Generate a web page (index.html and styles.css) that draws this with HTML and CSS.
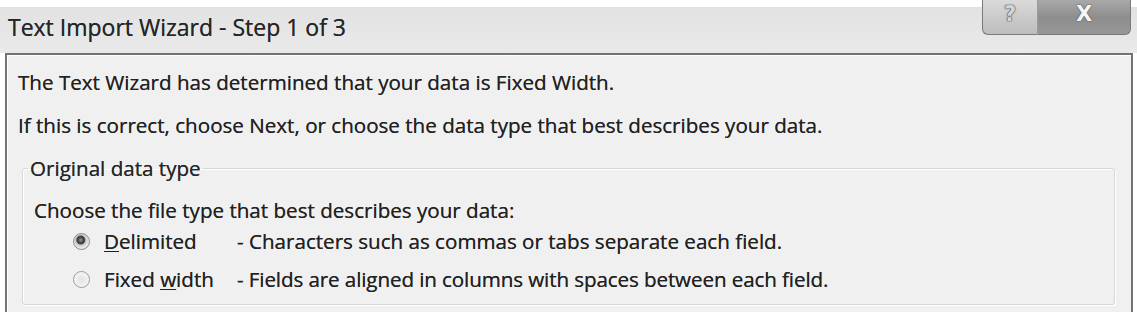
FILE: index.html
```html
<!DOCTYPE html>
<html>
<head>
<meta charset="utf-8">
<link rel="stylesheet" href="styles.css">
</head>
<body>
<div class="window">
  <div class="caption">
    <div class="title">Text Import Wizard - Step 1 of 3</div>
    <div class="ctl">
      <div class="btn help"><span>?</span></div>
      <div class="btn close"><span>X</span></div>
    </div>
  </div>
  <div class="panel">
    <p class="line l1">The Text Wizard has determined that your data is Fixed Width.</p>
    <p class="line l2">If this is correct, choose Next, or choose the data type that best describes your data.</p>
    <fieldset class="group">
      <legend>Original data type</legend>
      <p class="line choose">Choose the file type that best describes your data:</p>
      <div class="opt o1">
        <span class="radio on"></span>
        <span class="name"><u>D</u>elimited</span>
        <span class="desc">- Characters such as commas or tabs separate each field.</span>
      </div>
      <div class="opt o2">
        <span class="radio"></span>
        <span class="name">Fixed <u>w</u>idth</span>
        <span class="desc d2">- Fields are aligned in columns with spaces between each field.</span>
      </div>
    </fieldset>
  </div>
</div>
</body>
</html>
```

FILE: styles.css
```css
html, body {
  margin: 0;
  padding: 0;
  background: #ffffff;
}
body {
  width: 1137px;
  height: 312px;
  overflow: hidden;
  font-family: "Open Sans", "Noto Sans", sans-serif;
  color: #222222;
}
.window {
  display: flex;
  flex-direction: column;
  height: 312px;
}
.caption {
  display: flex;
  height: 53px;
  background: linear-gradient(to bottom, #ffffff 0, #ffffff 7px, #e2e2e2 7px, #e6e6e6 30px, #e9e9e9 53px);
  flex-shrink: 0;
}
.title {
  padding: 13px 0 0 8px;
  font-size: 23px;
  line-height: 28px;
  color: #262626;
  text-shadow: 0 0 0.6px #444;
}
.ctl {
  margin-left: auto;
  margin-right: 6px;
  display: flex;
  height: 35px;
}
.btn {
  display: flex;
  justify-content: center;
  align-items: flex-start;
  border: 1px solid #7a7a7a;
  border-top: none;
  font-family: "DejaVu Sans", sans-serif;
  font-weight: bold;
  color: #f6f6f6;
}
.btn span {
  font-size: 21px;
  line-height: 22px;
  padding-top: 3px;
  text-shadow: 0 0 1px #444, 0 0 2px #666;
}
.help {
  width: 54px;
  border-radius: 0 0 0 6px;
  border-right: 1px solid #9a9a9a;
  background: linear-gradient(to bottom, #dadada, #cbcbcb 50%, #bdbdbd);
}
.help span {
  color: #d6d6d6;
  text-shadow: 0 0 1px #444, 0 0 1px #555, 0 0 2px #777;
}
.close {
  width: 92px;
  border-left: none;
  border-radius: 0 0 6px 0;
  background: linear-gradient(to bottom, #a9a9a9, #8e8e8e 50%, #979797);
}
.panel {
  flex: 1;
  margin: 0 4px 0 5px;
  border: 2px solid #737373;
  border-bottom: none;
  background: #f0f0f0;
  padding: 0 16px 0 11px;
  box-shadow: inset 1px 1px 0 #ffffff;
}
.line {
  margin: 0;
  font-size: 20.6px;
  line-height: 26px;
  white-space: nowrap;
  text-shadow: 0 0 0.6px #444;
}
.l1 { margin-top: 14px; }
.l2 { margin-top: 17px; }
.group {
  margin: 17px 0 0 4px;
  padding: 16px 0 12px 0;
  border: 1px solid #d6d6d6;
  border-radius: 3px;
  box-shadow: inset 1px 1px 0 #ffffff, 1px 1px 0 #ffffff;
}
.group legend {
  font-size: 20.6px;
  line-height: 26px;
  padding: 0 2px;
  margin-left: 5px;
  color: #262626;
  text-shadow: 0 0 0.6px #444;
}
.choose {
  margin-left: 11px;
}
.opt {
  display: flex;
  align-items: center;
  font-size: 20.6px;
  line-height: 26px;
  white-space: nowrap;
  margin-left: 50px;
  text-shadow: 0 0 0.6px #444;
}
.o1 { margin-top: 5px; }
.o2 { margin-top: 12px; }
.d2 { letter-spacing: -0.1px; }
.radio {
  width: 15px;
  height: 15px;
  border-radius: 50%;
  border: 1px solid #9a9a9a;
  background: radial-gradient(circle at 50% 50%, #e2e2e2 0, #f4f4f4 70%);
  box-sizing: content-box;
  text-shadow: none;
}
.radio.on {
  border-color: #8a8a8a;
  background: radial-gradient(circle at 45% 40%, #9a9a9a 0, #3e3e3e 3px, #4a4a4a 4px, #c8c8c8 5px, #eaeaea 8px);
}
.name {
  margin-left: 14px;
  width: 133px;
}
.name u {
  text-decoration-thickness: 1px;
  text-underline-offset: 2px;
}
```
